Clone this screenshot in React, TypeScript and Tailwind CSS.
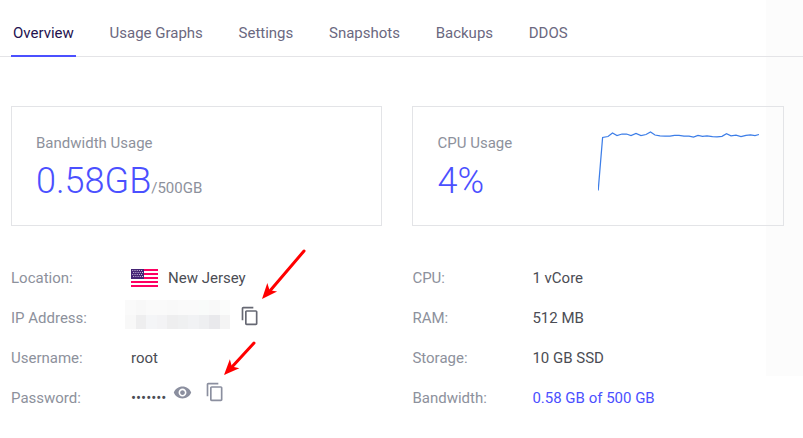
import React from "react";

const COPY = "M16 1H4c-1.1 0-2 .9-2 2v14h2V3h12V1zm3 4H8c-1.1 0-2 .9-2 2v14c0 1.1.9 2 2 2h11c1.1 0 2-.9 2-2V7c0-1.1-.9-2-2-2zm0 16H8V7h11v14z";

const tabs = ["Overview", "Usage Graphs", "Settings", "Snapshots", "Backups", "DDOS"];

const mosaic = [
  ["#fafafa", "#f8f8f8", "#fafafa", "#fafafa", "#f9f9f9", "#fafafa", "#fafafa", "#f9fbfa", "#f9f9f9", "#fbfcfb"],
  ["#f8f8f8", "#eeeeef", "#f4f5f7", "#f3f3f5", "#eeeeef", "#eff0f1", "#f1f2f4", "#eeeff1", "#e9e9ec", "#f4f4f4"],
];

function CopyIcon({ className }: { className: string }) {
  return (
    <svg viewBox="0 0 24 24" className={className} fill="currentColor">
      <path d={COPY} />
    </svg>
  );
}

function Flag() {
  return (
    <svg viewBox="0 0 27 18" className="h-[18px] w-[27px] shrink-0">
      <rect width="27" height="18" fill="#fff" />
      {[0, 4, 8, 12, 16].map((y) => (
        <rect key={y} y={y} width="27" height="2" fill="#ff0062" />
      ))}
      <rect width="13" height="10" fill="#452475" />
      {[1.5, 3.5, 5.5, 7.5].map((y, r) =>
        [0, 1, 2, 3, 4].map((c) => (
          <circle key={`${r}-${c}`} cx={1.8 + c * 2.2 + (r % 2) * 0.9} cy={y} r="0.55" fill="#e6dff0" />
        )),
      )}
    </svg>
  );
}

function Arrow({ className, x, y }: { className: string; x: number; y: number }) {
  const angle = (Math.atan2(y, -x) * 180) / Math.PI;
  return (
    <svg viewBox="0 0 50 55" className={`absolute overflow-visible ${className}`} fill="#f00">
      <path d={`M${x} 0L7 ${y - 7}`} stroke="#f00" strokeWidth="3" strokeLinecap="round" />
      <path d="M0 0L-15.5 -6.5L-11.5 0L-15.5 6.5Z" transform={`translate(0 ${y}) rotate(${angle})`} />
    </svg>
  );
}

function Row({ label, children }: { label: string; children: React.ReactNode }) {
  return (
    <div className="flex h-10 items-center">
      <div className="w-[120px] shrink-0 text-[#8d919c]">{label}</div>
      <div className="flex items-center">{children}</div>
    </div>
  );
}

export default function App() {
  return (
    <div className="relative h-[438px] w-[803px] overflow-hidden bg-white font-[Roboto,sans-serif] text-[15px] leading-5 text-[#4b4d54]">
      <div className="absolute right-0 top-0 h-[376px] w-[37px] bg-[#fcfcfc]" />
      <div className="relative">
        <nav className="flex h-[57px] gap-[31.7px] border-b border-[#e4e4e7] pl-[11px] text-[#6b6880]">
          {tabs.map((t, i) => (
            <div
              key={t}
              className={
                i === 0
                  ? "-mb-px h-[57px] border-b-2 border-[#4b50ff] px-0.5 pt-[23px] text-[#24124f]"
                  : "px-0.5 pt-[23px]"
              }
            >
              {t}
            </div>
          ))}
        </nav>

        <div className="ml-[11px] mt-[49px] flex gap-[30px]">
          <section className="h-[120px] w-[371px] border border-[#e3e4e7] pl-6 pt-[26px]">
            <div className="text-[#8d919c]">Bandwidth Usage</div>
            <div className="mt-[6px] flex items-baseline leading-[44px]">
              <span className="text-[36px] font-light text-[#4b50ff]">0.58GB</span>
              <span className="text-[#8d919c]">/500GB</span>
            </div>
          </section>
          <section className="flex h-[120px] w-[372px] justify-between border border-[#e3e4e7] pl-[24.5px] pt-[26px]">
            <div>
              <div className="text-[#8d919c]">CPU Usage</div>
              <div className="mt-[6px] text-[36px] font-light leading-[44px] text-[#4b50ff]">4%</div>
            </div>
            <svg viewBox="0 0 162 62" className="-mt-1 mr-[23px] h-[62px] w-[162px]" fill="none">
              <polyline
                points="0.2,61.5 4.6,8.5 10,7.5 14.5,4 19,6.5 24,5 28.5,5 33,6.5 38,4.5 43,6.5 48,5.5 52.5,3 57,6 62,6.8 67,7.2 72,7.2 76.5,6.3 81,6.3 86,7.2 91,7.2 95.5,8.2 100,6.5 104.5,7.3 109,6.8 114.5,7.7 119,7.8 124,7.3 128.5,4.8 133,6.8 138,6.2 143,7.7 148,6.3 152.5,5.8 157,6.5 161,5.5"
                stroke="#3d7ee8"
                strokeWidth="1.25"
              />
            </svg>
          </section>
        </div>

        <div className="ml-[11px] mt-8 flex">
          <div className="w-[401.4px]">
            <Row label="Location:">
              <Flag />
              <span className="ml-[10px]">New Jersey</span>
            </Row>
            <Row label="IP Address:">
              <div className="-ml-[6px] -mt-[7px] flex h-[29px] w-[105px] flex-col">
                {mosaic.map((r, i) => (
                  <div key={i} className="flex flex-1">
                    {r.map((c, j) => (
                      <span key={j} className="flex-1" style={{ backgroundColor: c }} />
                    ))}
                  </div>
                ))}
              </div>
              <CopyIcon className="-mt-1 ml-[9.5px] size-[20px] text-[#666873]" />
            </Row>
            <Row label="Username:">root</Row>
            <Row label="Password:">
              <span className="w-[35px]">•••••••</span>
              <svg viewBox="0 0 24 24" className="-mt-3 ml-[7px] size-[19px] text-[#8b8f9f]" fill="currentColor">
                <path d="M12 4.5C7 4.5 2.73 7.61 1 12c1.73 4.39 6 7.5 11 7.5s9.27-3.11 11-7.5c-1.73-4.39-6-7.5-11-7.5zM12 17c-2.76 0-5-2.24-5-5s2.24-5 5-5 5 2.24 5 5-2.24 5-5 5zm0-8c-1.66 0-3 1.34-3 3s1.34 3 3 3 3-1.34 3-3-1.34-3-3-3z" />
              </svg>
              <CopyIcon className="-mt-3 ml-[13px] size-[20px] text-[#8b8f9f]" />
            </Row>
          </div>
          <div>
            <Row label="CPU:">1 vCore</Row>
            <Row label="RAM:">512 MB</Row>
            <Row label="Storage:">10 GB SSD</Row>
            <Row label="Bandwidth:">
              <span className="text-[#4b50ff]">0.58 GB of 500 GB</span>
            </Row>
          </div>
        </div>
      </div>
      <Arrow className="left-[262px] top-[251px] h-[55px] w-[50px]" x={42} y={48} />
      <Arrow className="left-[224px] top-[343px] h-[55px] w-[50px]" x={30} y={32} />
    </div>
  );
}
